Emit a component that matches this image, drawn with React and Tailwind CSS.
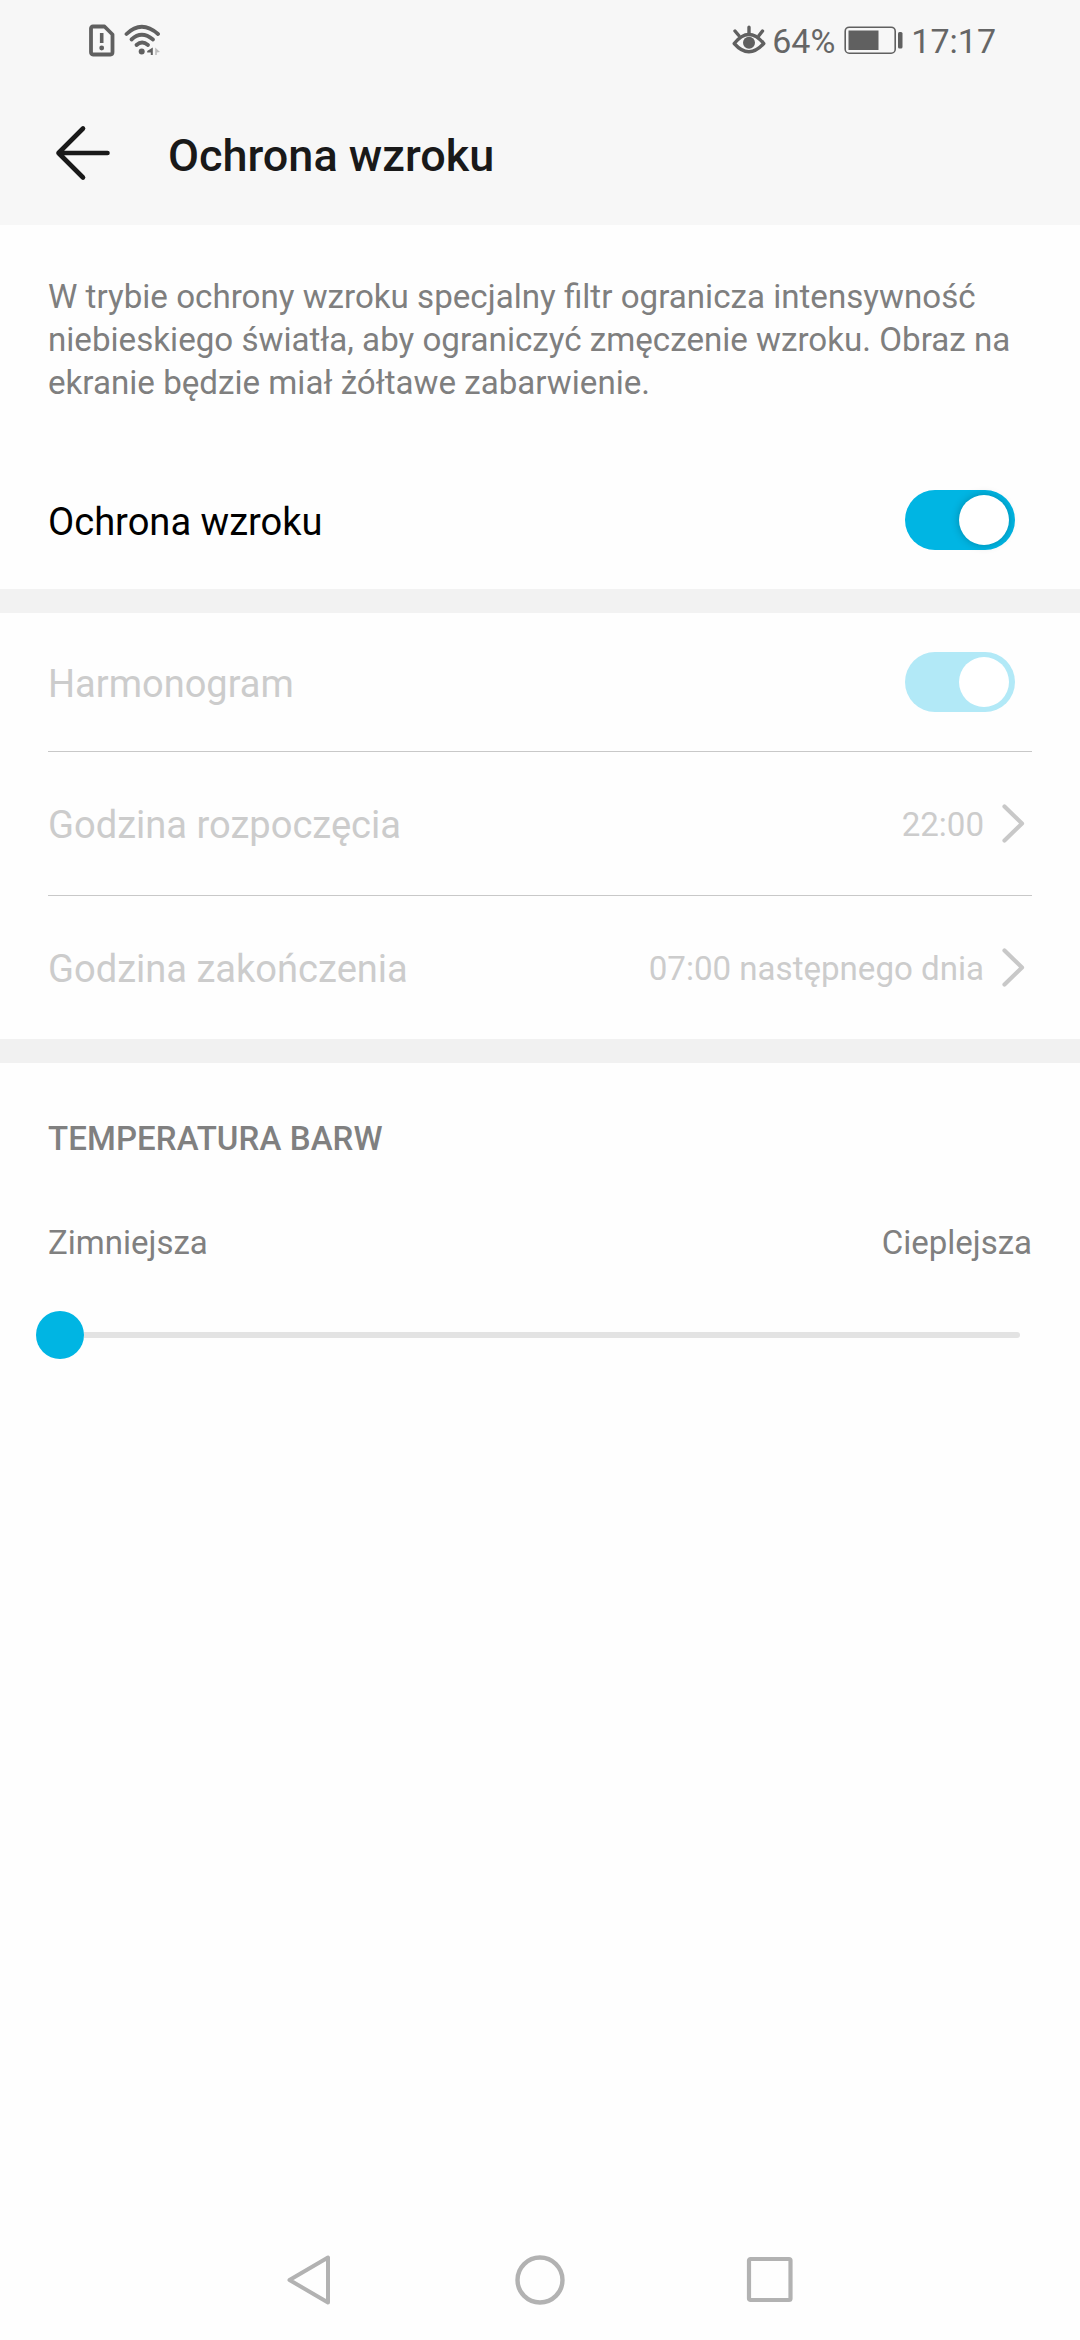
import { useState } from "react";

export default function App() {

  const [enabled, setEnabled] = useState(true);

  return (
    <div className="flex h-[2340px] w-[1080px] flex-col bg-[#fefefe] font-['Roboto',sans-serif]">
      {/* Status bar + title */}
      <div className="h-[225px] bg-[#f7f7f7]">
        <StatusBar />
        <header className="flex h-[145px] items-center pl-[54px]">
          <button type="button">
            <BackIcon />
          </button>
          <h1 className="ml-14 pt-[6px] text-[45px] leading-[54px] font-medium text-[#191919]">Ochrona wzroku</h1>
        </header>
      </div>

      <main className="flex-1">
        <p className="px-12 pt-[50px] text-[33.15px] leading-[43px] text-[#7f7f7f]">
          W trybie ochrony wzroku specjalny filtr ogranicza intensywność<br />
          niebieskiego światła, aby ograniczyć zmęczenie wzroku. Obraz na<br />
          ekranie będzie miał żółtawe zabarwienie.
        </p>

        <div className="mt-[47px] flex h-[138px] items-center justify-between pr-[65px] pl-12">
          <p className="pt-1 text-[38.1px] leading-[46px] text-black">Ochrona wzroku</p>
          <Toggle checked={enabled} onChanged={setEnabled} />
        </div>

        <div className="h-6 bg-[#f2f2f2]" />

        {/* Schedule */}
        <div className="mx-12 flex h-[139px] items-center justify-between border-b border-[#c8c8c8] pr-[17px]">
          <p className="pt-1 text-[38px] leading-[46px] text-[#cccccc]">Harmonogram</p>
          <Toggle checked disabled />
        </div>
        <div className="mx-12 h-36 border-b border-[#c8c8c8]">
          <TimeRow label="Godzina rozpoczęcia" value="22:00" />
        </div>
        <div className="mx-12 h-[143px]">
          <TimeRow label="Godzina zakończenia" value="07:00 następnego dnia" />
        </div>

        <div className="h-6 bg-[#f1f1f1]" />

        {/* Colour temperature */}
        <section className="px-12 pt-14 text-[33px] leading-10 text-[#808080]">
          <h2 className="font-medium tracking-[0.1px]">TEMPERATURA BARW</h2>
          <div className="mt-16 flex justify-between">
            <span>Zimniejsza</span>
            <span>Cieplejsza</span>
          </div>
          <div className="mt-12 -ml-3 flex h-12 w-[984px] items-center">
            <div className="size-12 shrink-0 rounded-full bg-[#00b5e3]" />
            <div className="h-1.5 flex-1 rounded-r-full bg-[#e3e3e3]" />
          </div>
        </section>
      </main>

      <NavBar />
    </div>
  );
}


const StatusBar = () => {
  return (
    <div className="flex h-20 items-center justify-between pr-[84px] pl-[88px] text-[34px] leading-10 text-[#666666]">
      <div className="flex items-center gap-2">
        <SimIcon />
        <WifiIcon />
      </div>
      <div className="flex items-center">
        <EyeIcon />
        <span className="ml-[5px] pt-0.5">64%</span>
        <BatteryIcon />
        <span className="ml-[7px] pt-0.5">17:17</span>
      </div>
    </div>
  )
}

const TimeRow = ({label, value}) => {
  return (
    <div className="flex h-full items-center justify-between pr-1 text-[#cccccc]">
      <p className="pt-[3px] text-[38.1px] leading-[46px]">{label}</p>
      <div className="flex items-center">
        <p className="pt-[3px] text-[33.1px] leading-10">{value}</p>
        <ChevronIcon />
      </div>
    </div>
  )
}

const Toggle = ({checked, disabled, onChanged}) => {
  return (
    <button
      type="button"
      disabled={disabled}
      onClick={() => onChanged(!checked)}
      className={`flex h-[60px] w-[110px] items-center rounded-full px-[6px] ${checked ? "justify-end" : "justify-start"} ${disabled ? "bg-[#b2e9f7]" : "bg-[#00b5e3]"}`}>
        <span className={`size-[50px] rounded-full bg-white ${disabled ? "" : "shadow-[0_0_8px_rgba(0,0,0,0.25)]"}`} />
    </button>
  )
}

const NavBar = () => {
  return (
    <nav className="flex h-30 items-center justify-center gap-[180px]">
      <svg width="50" height="54" viewBox="0 0 50 54" fill="none" stroke="#b2b2b2" strokeWidth="4" strokeLinejoin="round">
        <path d="M43 4.5V49.5L4.5 27Z" />
      </svg>
      <svg width="50" height="50" viewBox="0 0 50 50" fill="none" stroke="#b2b2b2" strokeWidth="4.4">
        <circle cx="25" cy="25" r="22.5" />
      </svg>
      <svg width="50" height="50" viewBox="0 0 50 50" fill="none" stroke="#b2b2b2" strokeWidth="4.2">
        <rect x="4" y="4" width="41.5" height="41" rx="1.5" />
      </svg>
    </nav>
  )
}

const BackIcon = () => (
  <svg width="58" height="58" viewBox="0 0 58 58" fill="none" stroke="#191919" strokeWidth="4.6" strokeLinecap="round" strokeLinejoin="round">
    <path d="M29 4.5L4.5 29L29 53.5M4.5 29H53.5" />
  </svg>
)

const ChevronIcon = () => (
  <svg className="ml-[14px]" width="30" height="46" viewBox="0 0 30 46" fill="none" stroke="#c8c8c8" strokeWidth="4.2" strokeLinecap="round" strokeLinejoin="round">
    <path d="M6.5 5.5L24 22.5L6.5 39.5" />
  </svg>
)

const SimIcon = () => (
  <svg width="28" height="34" viewBox="0 0 28 34" fill="none" stroke="#606060">
    <path d="M5 3.5H16.5L24.5 11.5V29Q24.5 31.5 22.5 31.5H5Q3 31.5 3 29V5.5Q3 3.5 5 3.5Z" strokeWidth="3.8" strokeLinejoin="round" />
    <path d="M13.7 10V20" strokeWidth="3.6" />
    <circle cx="13.7" cy="25" r="2.4" fill="#606060" stroke="none" />
  </svg>
)

const WifiIcon = () => (
  <svg width="38" height="34" viewBox="0 0 38 34" fill="none" stroke="#606060" strokeWidth="3.8" strokeLinecap="round">
    <path d="M2.5 11Q17.5 -3.5 34 11" />
    <path d="M7.5 16.5Q17.5 7 29 16.5" />
    <path d="M12.5 22Q18 17 24 22" />
    <circle cx="17.7" cy="28.5" r="3" fill="#606060" stroke="none" />
    <path d="M28.8 24.5V32H26.8V29.4H23.2V28Z" fill="#606060" stroke="none" />
    <path d="M31.2 24.5L36 29L32.8 29.4V32H31.2Z" fill="#bdbdbd" stroke="none" />
  </svg>
)

const EyeIcon = () => (
  <svg width="36" height="32" viewBox="0 0 36 32" fill="none" stroke="#606060" strokeWidth="3.4" strokeLinecap="round">
    <path d="M3.2 19.5Q17.8 1.5 32.8 19.5Q17.8 36 3.2 19.5Z" strokeLinejoin="round" />
    <path d="M18 9.5V3.2M7.8 11.5L4 7M28 11.5L31.5 7" />
    <circle cx="18" cy="18.8" r="6" fill="#606060" stroke="none" />
  </svg>
)

const BatteryIcon = () => (
  <svg className="ml-[9px]" width="60" height="30" viewBox="0 0 60 30">
    <rect x="1.2" y="2.2" width="50" height="26" rx="4" fill="none" stroke="#606060" strokeWidth="1.6" />
    <rect x="4.5" y="5.5" width="30" height="19.5" fill="#606060" />
    <rect x="54" y="7" width="4.5" height="16.5" rx="1.5" fill="#606060" />
  </svg>
)
